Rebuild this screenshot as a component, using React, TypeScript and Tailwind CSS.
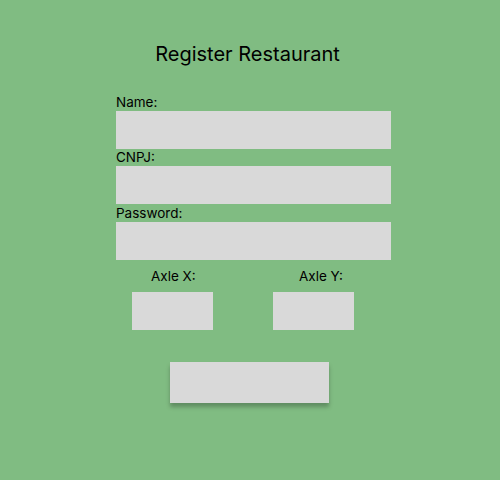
const Field = ({ label }: { label: string }) => (
    <div className="flex flex-col">
        <label className="text-[13.5px] leading-[17px]">{label}</label>
        <input className="h-[38px] w-full bg-[#d9d9d9] outline-none" />
    </div>
)

const App = () => {
    return (
        <div
            className="w-[500px] h-[480px] bg-[#80bc82] text-black overflow-hidden"
            style={{ fontFamily: "Inter, 'Noto Sans', sans-serif" }}
        >
            <h1 className="pt-[42px] text-center text-[20px] leading-[24px] pr-[5px]">Register Restaurant</h1>

            <form className="ml-[116px] w-[275px] mt-[28px] flex flex-col">
                <Field label="Name:" />
                <Field label="CNPJ:" />
                <div className="mt-px">
                    <Field label="Password:" />
                </div>

                <div className="flex mt-[8px]">
                    <div className="ml-[16px] w-[81px] flex flex-col">
                        <span className="pl-[19px] text-[13.5px] leading-[17px] whitespace-nowrap">Axle X:</span>
                        <input className="mt-[7px] h-[38px] w-[81px] bg-[#d9d9d9] outline-none" />
                    </div>
                    <div className="ml-[60px] w-[81px] flex flex-col">
                        <span className="pl-[26px] text-[13.5px] leading-[17px] whitespace-nowrap">Axle Y:</span>
                        <input className="mt-[7px] h-[38px] w-[81px] bg-[#d9d9d9] outline-none" />
                    </div>
                </div>

                <button
                    type="button"
                    className="mt-[32px] ml-[54px] w-[159px] h-[41px] bg-[#d9d9d9] shadow-[0_4px_4px_rgba(0,0,0,0.25)]"
                />
            </form>
        </div>
    )
}

export default App
